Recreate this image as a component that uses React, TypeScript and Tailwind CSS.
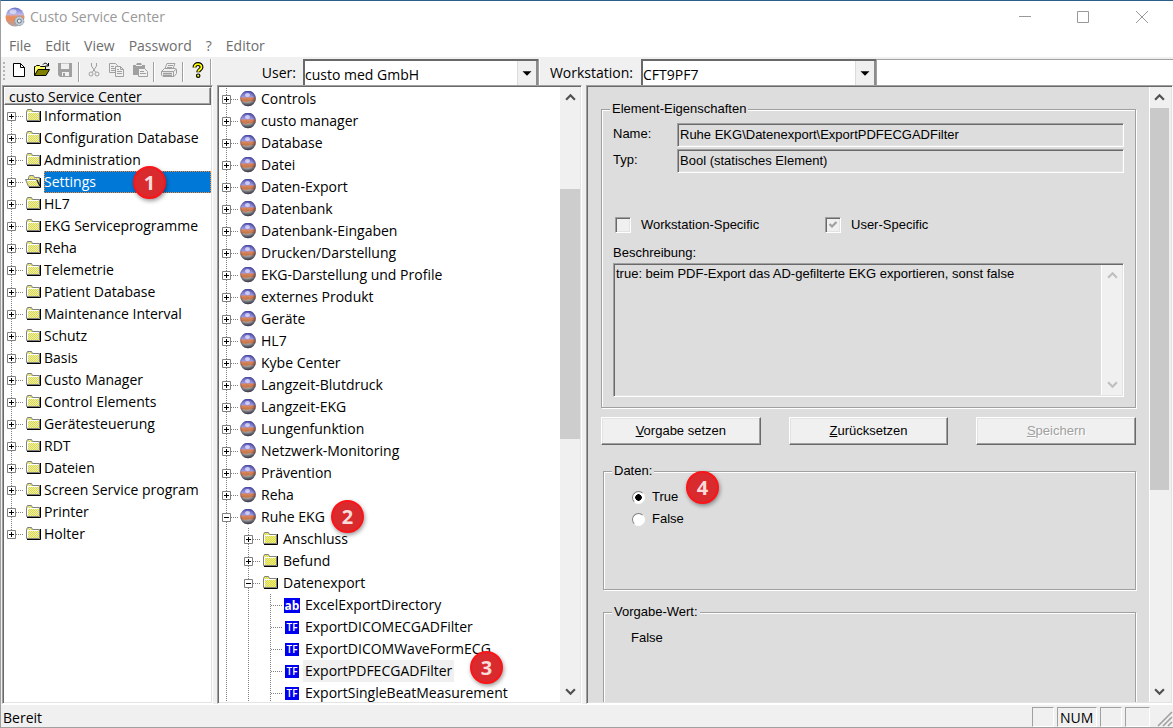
import { useState } from 'react';
import type { ReactNode } from 'react';
import clsx from 'clsx';

type IconName = 'folder' | 'open' | 'sphere' | 'yellow' | 'text' | 'bool';

type TreeItem = {
  label: string;
  icon: IconName;
  level?: number;
  state?: 'plus' | 'minus' | 'leaf';
  badge?: string;
};

const sunken =
  'border border-t-[#a0a0a0] border-l-[#a0a0a0] border-r-white border-b-white shadow-[inset_1px_1px_0_#696969,inset_-1px_-1px_0_#e3e3e3]';
const raised =
  'border border-t-white border-l-white border-r-[#696969] border-b-[#696969] bg-[#f0f0f0] shadow-[inset_-1px_-1px_0_#a0a0a0,inset_1px_1px_0_#e3e3e3]';

const menu = ['File', 'Edit', 'View', 'Password', '?', 'Editor'];

const sections = [
  'Information',
  'Configuration Database',
  'Administration',
  'Settings',
  'HL7',
  'EKG Serviceprogramme',
  'Reha',
  'Telemetrie',
  'Patient Database',
  'Maintenance Interval',
  'Schutz',
  'Basis',
  'Custo Manager',
  'Control Elements',
  'Gerätesteuerung',
  'RDT',
  'Dateien',
  'Screen Service program',
  'Printer',
  'Holter',
];

const groups = [
  'Controls',
  'custo manager',
  'Database',
  'Datei',
  'Daten-Export',
  'Datenbank',
  'Datenbank-Eingaben',
  'Drucken/Darstellung',
  'EKG-Darstellung und Profile',
  'externes Produkt',
  'Geräte',
  'HL7',
  'Kybe Center',
  'Langzeit-Blutdruck',
  'Langzeit-EKG',
  'Lungenfunktion',
  'Netzwerk-Monitoring',
  'Prävention',
  'Reha',
];

const settings: TreeItem[] = [
  ...groups.map((label): TreeItem => ({ label, icon: 'sphere' })),
  { label: 'Ruhe EKG', icon: 'sphere', state: 'minus', badge: '2' },
  { label: 'Anschluss', icon: 'yellow', level: 1 },
  { label: 'Befund', icon: 'yellow', level: 1 },
  { label: 'Datenexport', icon: 'yellow', level: 1, state: 'minus' },
  { label: 'ExcelExportDirectory', icon: 'text', level: 2, state: 'leaf' },
  { label: 'ExportDICOMECGADFilter', icon: 'bool', level: 2, state: 'leaf' },
  { label: 'ExportDICOMWaveFormECG', icon: 'bool', level: 2, state: 'leaf' },
  { label: 'ExportPDFECGADFilter', icon: 'bool', level: 2, state: 'leaf', badge: '3' },
  { label: 'ExportSingleBeatMeasurement', icon: 'bool', level: 2, state: 'leaf' },
];

export default function App() {
  const [section, setSection] = useState('Settings');
  const [setting, setSetting] = useState('ExportPDFECGADFilter');

  return (
    <div className="flex h-screen flex-col overflow-hidden border-t border-b border-l border-t-[#2a5f8c] border-b-[#a0a0a0] border-l-[#a0a0a0] bg-[#f0f0f0] font-['Open_Sans','Noto_Sans',sans-serif] text-sm text-black">
      <SharedDefs />
      <TitleBar />
      <nav className="flex h-[25px] shrink-0 items-center gap-[14px] bg-white pt-[2px] pl-2 text-[#6d6d6d]">
        {menu.map((item) => (
          <button className="leading-5" key={item} type="button">
            {item}
          </button>
        ))}
      </nav>
      <div className="flex h-7 shrink-0 border-t-2 border-t-[#f0f0f0] bg-white shadow-[inset_0_1px_0_#a0a0a0]">
        <Toolbar />
        <ComboBand label="User:" options={['custo med GmbH', 'Administrator']} />
        <ComboBand label="Workstation:" options={['CFT9PF7', 'Default']} narrow />
      </div>

      <main className="flex min-h-0 flex-1 gap-1 pl-px">
        <section className={clsx('flex w-[211px] shrink-0 flex-col overflow-hidden bg-white p-px', sunken)}>
          <h2 className="h-[18px] shrink-0 overflow-hidden border border-t-white border-l-white border-r-[#696969] border-b-[#696969] bg-[#f0f0f0] pl-1 leading-[18px] shadow-[inset_-1px_-1px_0_#a0a0a0]">
            custo Service Center
          </h2>
          <ul>
            {sections.map((label, index) => (
              <TreeRow
                first={index === 0}
                item={{
                  label,
                  icon: label === section ? 'open' : 'folder',
                  badge: label === 'Settings' ? '1' : undefined,
                }}
                key={label}
                last={index === sections.length - 1}
                onSelect={() => setSection(label)}
                selected={label === section}
                wide
              />
            ))}
          </ul>
        </section>

        <section className={clsx('flex w-[365px] shrink-0 overflow-hidden bg-white p-px', sunken)}>
          <ul className="min-w-0 flex-1 overflow-hidden pt-px">
            {settings.map((item) => (
              <TreeRow
                item={item}
                key={item.label}
                onSelect={() => setSetting(item.label)}
                selected={item.label === setting}
              />
            ))}
          </ul>
          <div className="flex w-5 flex-col bg-[#f0f0f0] text-[#505050]">
            <ScrollArrow up />
            <div className="flex-[81]" />
            <div className="flex-[251] bg-[#cdcdcd]" />
            <div className="flex-[242]" />
            <ScrollArrow />
          </div>
        </section>

        <section className={clsx('flex min-w-0 flex-1 overflow-hidden bg-[#dddddd] p-px', sunken)}>
          <Properties />
          <div className="flex w-[22px] shrink-0 flex-col border-r-2 border-l border-r-[#f0f0f0] border-l-white bg-[#f0f0f0] text-[#505050]">
            <ScrollArrow up />
            <div className="flex-[383] bg-[#c9c9c9]" />
            <div className="flex-[191]" />
            <ScrollArrow />
          </div>
        </section>
      </main>

      <footer className="flex h-[23px] shrink-0 items-stretch gap-[3px] border-t border-t-white pt-[2px] pl-[2px]">
        <span className="flex-1 leading-[22px]">Bereit</span>
        <StatusCell className="w-[22px]" />
        <StatusCell className="w-10">NUM</StatusCell>
        <StatusCell className="w-[22px]" />
        <StatusCell className="w-[25px]" />
        <svg aria-hidden="true" className="size-5" fill="none" viewBox="0 0 20 20">
          <path d="M5 19 19 5M10 19l9-9M15 19l4-4" stroke="#a0a0a0" strokeWidth="1.6" />
        </svg>
      </footer>
    </div>
  );
}

function TitleBar() {
  return (
    <header className="flex h-[31px] shrink-0 items-center bg-white pr-px pl-1 text-[#999]">
      <svg aria-hidden="true" className="size-5" viewBox="0 0 20 20">
        <circle cx="10" cy="10" fill="url(#sphere-light)" r="9.5" />
        <ellipse cx="8" cy="4.5" fill="#fff" opacity=".55" rx="3.5" ry="2.3" />
        <circle cx="14.3" cy="14" fill="#c3ccd4" r="4.6" stroke="#8a97a3" strokeDasharray="1.8 1" />
        <circle cx="14.3" cy="14" fill="#e8eef2" r="2" stroke="#667788" />
      </svg>
      <h1 className="ml-[5px] flex-1 leading-5">Custo Service Center</h1>
      <button aria-label="Minimize" className="grid h-full w-[58px] place-items-center" type="button">
        <svg className="size-3" fill="none" viewBox="0 0 12 12">
          <path d="M0 5.5h12" stroke="currentColor" />
        </svg>
      </button>
      <button aria-label="Maximize" className="grid h-full w-[58px] place-items-center" type="button">
        <svg className="size-3" fill="none" viewBox="0 0 12 12">
          <path d="M.5.5h11v11H.5z" stroke="currentColor" />
        </svg>
      </button>
      <button aria-label="Close" className="grid h-full w-[60px] place-items-center" type="button">
        <svg className="size-3" fill="none" viewBox="0 0 12 12">
          <path d="m0 0 12 12M12 0 0 12" stroke="currentColor" />
        </svg>
      </button>
    </header>
  );
}

function Toolbar() {
  return (
    <div className="flex w-[210px] shrink-0 items-center border-r border-r-[#a0a0a0] bg-[#f0f0f0] pl-[2px]">
      <div className="mr-[2px] h-5 w-[2px] bg-[repeating-linear-gradient(#b4b4b4_0_2px,transparent_2px_4px)]" />
      <ToolButton label="New">
        <path d="M2.5 1.5h7l4 4v9h-11z" fill="#fff" stroke="#000" />
        <path d="M9.5 1.5v4h4" stroke="#000" />
      </ToolButton>
      <ToolButton label="Open">
        <path d="M.5 13.5v-9h1l1-1h3l1 1h5v3" fill="#ffff66" stroke="#000" />
        <path d="M.5 13.5 4 7.500h11.500L12 13.500z" fill="#808000" stroke="#000" />
        <path d="M9 2.500c1.500-2 4-1.500 5 1M14.500 1v3h-3" stroke="#000" />
      </ToolButton>
      <ToolButton label="Save">
        <path d="M1 1h14v14H3l-2-2z" fill="#a0a0a0" />
        <path d="M4 1.500h8V7H4zM5 10h7v4H5z" fill="#f0f0f0" />
        <path d="M6 11h2v3H6z" fill="#a0a0a0" />
      </ToolButton>
      <Separator />
      <ToolButton label="Cut">
        <path d="M5.500 1v3l4 6M10.500 1v3l-4 6" stroke="#a0a0a0" />
        <circle cx="5" cy="12" r="2" stroke="#a0a0a0" />
        <circle cx="11" cy="12" r="2" stroke="#a0a0a0" />
      </ToolButton>
      <ToolButton label="Copy">
        <path d="M.5 1.500h6l2 2v7h-8zM2 4.500h3M2 6.500h5M2 8.500h4" stroke="#a0a0a0" />
        <path d="M6.500 4.500h5l3 3v7h-8z" fill="#f0f0f0" stroke="#a0a0a0" />
        <path d="M11.500 4.500v3h3M8 7.500h2M8 9.500h5M8 11.500h5" stroke="#a0a0a0" />
      </ToolButton>
      <ToolButton label="Paste">
        <path d="M1 3h3l1-2h4l1 2h3v10H1z" fill="#a0a0a0" />
        <path d="M4 3.500h6" stroke="#f0f0f0" />
        <path d="M6.500 6.500h6l3 3v5h-9z" fill="#f0f0f0" stroke="#a0a0a0" />
        <path d="M8 9.500h4M8 11.500h6" stroke="#a0a0a0" />
      </ToolButton>
      <Separator />
      <ToolButton label="Print">
        <path d="M4 6.500 6 1.500h8l-2 5M7 3.500h5M6 5.500h5" stroke="#a0a0a0" />
        <path d="m.5 9.500 3-3h11l1 1v4l-2.500 3H2l-1.500-1.500zM.5 9.500h12l3-2.500M12.500 9.500v5" stroke="#a0a0a0" />
        <path d="M2 11.500h9M2 13.500h9" stroke="#a0a0a0" strokeWidth="1.400" />
      </ToolButton>
      <Separator />
      <ToolButton label="Help">
        <path d="M4.500 5.500C4.500 1 11.500 1 11.500 5.200c0 2.300-3.300 2.800-3.300 5" stroke="#000" strokeWidth="4" />
        <path d="M4.500 5.500C4.500 1 11.500 1 11.500 5.200c0 2.300-3.300 2.800-3.300 4.500" stroke="#ff0" strokeWidth="1.800" />
        <circle cx="8.200" cy="13.700" fill="#ff0" r="1.700" stroke="#000" strokeWidth="1.200" />
      </ToolButton>
    </div>
  );
}

function ToolButton({ label, children }: { label: string; children: ReactNode }) {
  return (
    <button aria-label={label} className="grid h-6 w-[23px] shrink-0 place-items-center pb-1" type="button">
      <svg className="size-4" fill="none" viewBox="0 0 16 16">
        {children}
      </svg>
    </button>
  );
}

function Separator() {
  return <div className="mx-[2px] h-5 w-[2px] shrink-0 border-r border-l border-r-white border-l-[#a0a0a0]" />;
}

function ComboBand({ label, options, narrow }: { label: string; options: string[]; narrow?: boolean }) {
  return (
    <label className="flex shrink-0 border-r border-l border-r-[#a0a0a0] border-l-white bg-[#f0f0f0]">
      <span
        className={clsx('text-right leading-[27px]', narrow ? 'w-[101px] pr-2' : 'w-[91px] pr-[7px]')}
      >
        {label}
      </span>
      <span className="relative flex w-[235px] border-t-2 border-l-2 border-t-[#696969] border-l-[#696969] bg-white">
        <select className="w-full appearance-none bg-transparent pt-[3px] outline-none">
          {options.map((option) => (
            <option key={option}>{option}</option>
          ))}
        </select>
        <svg
          aria-hidden="true"
          className="pointer-events-none absolute top-0 right-0 h-full w-[21px] border-r-2 border-l border-r-[#8c8c8c] border-l-[#dcdcdc] bg-[#f0f0f0]"
          viewBox="0 0 20 24"
        >
          <path d="M5 10h10l-5 5z" fill="#000" />
        </svg>
      </span>
    </label>
  );
}

type TreeRowProps = {
  item: TreeItem;
  selected: boolean;
  onSelect: () => void;
  first?: boolean;
  last?: boolean;
  wide?: boolean;
};

function TreeRow({ item, selected, onSelect, first, last, wide }: TreeRowProps) {
  const { level = 0, state = 'plus' } = item;

  return (
    <li className="flex h-[22px] items-center whitespace-nowrap">
      {Array.from({ length: level }, (_, index) => (
        <svg aria-hidden="true" className="h-[22px] w-[22px] shrink-0" key={index} viewBox="0 0 22 22">
          <path d="M7.500 0v22" stroke="#808080" strokeDasharray="1 1" />
        </svg>
      ))}
      <svg aria-hidden="true" className="h-[22px] w-[21px] shrink-0" fill="none" viewBox="0 0 21 22">
        {first ? null : <path d="M7.500 0v11" stroke="#808080" strokeDasharray="1 1" />}
        {last ? null : <path d="M7.500 12v10" stroke="#808080" strokeDasharray="1 1" />}
        <path d="M8 11.500h11" stroke="#808080" strokeDasharray="1 1" />
        {state === 'leaf' ? null : (
          <>
            <path d="M3.500 7.500h8v8h-8z" fill="#fff" stroke="#808080" />
            <path d={state === 'plus' ? 'M5 11.500h5M7.500 9v5' : 'M5 11.500h5'} stroke="#000" />
          </>
        )}
      </svg>
      <NodeIcon name={item.icon} />
      <span className={clsx('relative ml-[3px] flex', wide && 'min-w-0 flex-1')}>
        <button
          className={clsx(
            'h-[22px] text-left leading-[22px]',
            wide ? 'w-full' : 'px-[2px]',
            selected && wide && 'bg-[#0078d7] text-white outline outline-dotted -outline-offset-1 outline-[#ff8728]',
            selected && !wide && 'bg-[#f0f0f0]',
          )}
          onClick={onSelect}
          type="button"
        >
          {item.label}
        </button>
        {item.badge === '1' ? <Badge className="top-[-5px] left-[89px]">1</Badge> : null}
        {item.badge === '2' ? <Badge className="top-[-6px] left-[72px]">2</Badge> : null}
        {item.badge === '3' ? <Badge className="top-[-9px] left-[167px]">3</Badge> : null}
      </span>
    </li>
  );
}

function Badge({ className, children }: { className: string; children: ReactNode }) {
  return (
    <span
      className={clsx(
        'pointer-events-none absolute z-10 grid size-[33px] place-items-center rounded-full border-2 border-[#fb1418] bg-[#d92a2e] text-xl leading-none font-bold text-[#fbdcdc] shadow-[1px_2px_4px_rgba(0,0,0,0.4)]',
        className,
      )}
    >
      {children}
    </span>
  );
}

function NodeIcon({ name }: { name: IconName }) {
  if (name === 'text' || name === 'bool') {
    return (
      <span
        className={clsx(
          'grid w-4 shrink-0 place-items-center bg-[#0000f0] bg-clip-content text-white',
          name === 'text' ? 'text-[12px] leading-[15px] font-bold' : 'px-px text-[10px] leading-[13px] font-semibold',
        )}
      >
        {name === 'text' ? 'ab' : 'TF'}
      </span>
    );
  }

  return (
    <svg aria-hidden="true" className="size-4 shrink-0" fill="none" viewBox="0 0 16 16">
      {name === 'sphere' ? (
        <>
          <circle cx="8" cy="7.500" fill="url(#sphere)" r="7.800" />
          <circle cx="8" cy="7.500" fill="url(#sphere-shade)" r="7.800" />
          <ellipse cx="7.500" cy="4" fill="#ececff" opacity=".7" rx="2.500" ry="2" />
          <path d="M3 8.500h1M6 7.500h1M9 9.500h1M11 7.500h2M5 10.500h2" stroke="#f07030" />
        </>
      ) : null}
      {name === 'folder' || name === 'yellow' ? (
        <>
          <path d="M2 13.500h13.500V3" stroke="#000" />
          <path
            d="M1.500 12.500v-9l1-2h4l1 2h7v9z"
            fill={name === 'yellow' ? 'url(#hatch-yellow)' : 'url(#hatch)'}
            stroke="#808080"
          />
          <path d="M2.500 11.500v-7h11" stroke="#fff" />
        </>
      ) : null}
      {name === 'open' ? (
        <>
          <path d="M3.500 6V3.500l1-2h4l1 2h5v9" fill="url(#hatch)" stroke="#808080" />
          <path d="M15.500 4v9.500H4" stroke="#000" />
          <path d="M.5 5.500h11l3 7h-11z" fill="url(#hatch)" stroke="#808080" />
          <path d="M2 6.500h9" stroke="#fff" />
          <path d="m12 6 3 6" stroke="#000" />
        </>
      ) : null}
    </svg>
  );
}

function ScrollArrow({ up }: { up?: boolean }) {
  return (
    <div className="grid h-[21px] shrink-0 place-items-center">
      <svg aria-hidden="true" className="size-[11px]" fill="none" viewBox="0 0 10 10">
        <path d={up ? 'm1 7 4-4 4 4' : 'm1 3 4 4 4-4'} stroke="currentColor" strokeWidth="2" />
      </svg>
    </div>
  );
}

function StatusCell({ className, children }: { className: string; children?: ReactNode }) {
  return (
    <span
      className={clsx(
        'border border-t-[#a0a0a0] border-l-[#a0a0a0] border-r-white border-b-white pl-[2px] leading-5',
        className,
      )}
    >
      {children}
    </span>
  );
}

function Group({ title, className, children }: { title: string; className?: string; children: ReactNode }) {
  return (
    <fieldset
      className={clsx(
        'relative min-w-0 border border-[#a0a0a0] px-2 shadow-[1px_1px_0_#fff,inset_1px_1px_0_#fff]',
        className,
      )}
    >
      <legend className="bg-[#dddddd] px-[2px] leading-4">{title}</legend>
      {children}
    </fieldset>
  );
}

function Properties() {
  const [value, setValue] = useState('True');

  return (
    <form className="min-w-0 flex-1 overflow-hidden px-[13px] pt-[14px] font-['Liberation_Sans',Arial,sans-serif] text-[13px]">
      <Group className="h-[307px]" title="Element-Eigenschaften">
        <div className="flex flex-col px-[3px] pt-[6px]">
          <Field label="Name:" value="Ruhe EKG\Datenexport\ExportPDFECGADFilter" />
          <Field label="Typ:" value="Bool (statisches Element)" />
          <div className="mt-[38px] flex h-6 items-center">
            <Check label="Workstation-Specific" />
            <Check checked label="User-Specific" />
          </div>
          <label className="mt-2 leading-4" htmlFor="description">
            Beschreibung:
          </label>
          <div className={clsx('mt-[2px] flex h-[134px] p-px', sunken)}>
            <textarea
              className="min-w-0 flex-1 resize-none bg-transparent p-px leading-4 outline-none"
              defaultValue="true: beim PDF-Export das AD-gefilterte EKG exportieren, sonst false"
              id="description"
              readOnly
            />
            <div className="flex w-[21px] flex-col justify-between border-l border-l-white bg-[#f0f0f0] text-[#bfbfbf]">
              <ScrollArrow up />
              <ScrollArrow />
            </div>
          </div>
        </div>
      </Group>

      <div className="mt-[9px] flex gap-7">
        <button className={clsx('h-7 flex-1', raised)} type="button">
          <u>V</u>orgabe setzen
        </button>
        <button className={clsx('h-7 flex-1', raised)} type="button">
          <u>Z</u>urücksetzen
        </button>
        <button className={clsx('h-7 flex-1 text-[#a0a0a0] text-shadow-[1px_1px_0_#fff]', raised)} disabled type="button">
          <u>S</u>peichern
        </button>
      </div>

      <Group className="mt-[18px] ml-[2px] h-[127px]" title="Daten:">
        <div className="flex flex-col items-start pt-[7px] pl-5">
          {['True', 'False'].map((option) => (
            <label className="flex h-[22px] items-center gap-[7px]" key={option}>
              <input
                checked={value === option}
                className="size-[13px] appearance-none rounded-full border border-t-[#808080] border-l-[#808080] border-r-white border-b-white bg-white checked:bg-[radial-gradient(circle,#000_0_3px,transparent_3.5px)]"
                name="data"
                onChange={() => setValue(option)}
                type="radio"
              />
              {option}
            </label>
          ))}
        </div>
        <Badge className="top-[-8px] left-[82px] font-['Open_Sans',sans-serif]">4</Badge>
      </Group>

      <Group className="mt-[14px] ml-[2px] h-[127px]" title="Vorgabe-Wert:">
        <p className="pt-[10px] pl-[19px] leading-4">False</p>
      </Group>
    </form>
  );
}

function Field({ label, value }: { label: string; value: string }) {
  return (
    <label className="mb-[2px] flex">
      <span className="w-16 shrink-0 pt-[3px] leading-4">{label}</span>
      <input className={clsx('h-6 min-w-0 flex-1 px-[2px] pb-[2px] outline-none', sunken)} defaultValue={value} readOnly />
    </label>
  );
}

function Check({ label, checked }: { label: string; checked?: boolean }) {
  return (
    <label className="relative flex w-[210px] items-center gap-[10px] pl-[2px]">
      <input
        className={clsx('size-4 appearance-none bg-[#f0f0f0]', sunken)}
        defaultChecked={checked}
        disabled
        type="checkbox"
      />
      {checked ? (
        <svg aria-hidden="true" className="pointer-events-none absolute left-[2px] size-4" fill="none" viewBox="0 0 16 16">
          <path d="m4.500 7 2.500 2.500L11.500 5" stroke="#a0a0a0" strokeWidth="2.200" />
        </svg>
      ) : null}
      {label}
    </label>
  );
}

// Paint servers used by the tree and title icons
function SharedDefs() {
  return (
    <svg aria-hidden="true" className="absolute size-0">
      <defs>
        <linearGradient id="sphere" x1="0" x2="0" y1="0" y2="1">
          <stop offset="0" stopColor="#5050b8" />
          <stop offset=".38" stopColor="#9a96e0" />
          <stop offset=".48" stopColor="#d88860" />
          <stop offset=".64" stopColor="#c07850" />
          <stop offset=".72" stopColor="#a0a0a0" />
          <stop offset="1" stopColor="#585858" />
        </linearGradient>
        <radialGradient cx=".45" cy=".45" id="sphere-shade" r=".55">
          <stop offset=".6" stopColor="#202040" stopOpacity="0" />
          <stop offset="1" stopColor="#202040" stopOpacity=".6" />
        </radialGradient>
        <linearGradient id="sphere-light" x1="0" x2="0" y1="0" y2="1">
          <stop offset="0" stopColor="#6a70c8" />
          <stop offset=".35" stopColor="#b8b8ec" />
          <stop offset=".5" stopColor="#f08a50" />
          <stop offset=".68" stopColor="#e0906c" />
          <stop offset="1" stopColor="#a8a8b0" />
        </linearGradient>
        <pattern height="2" id="hatch" patternUnits="userSpaceOnUse" width="2">
          <path d="M0 0h2v2H0z" fill="#c8c8c8" />
          <path d="M0 0h1v1H0zM1 1h1v1H1z" fill="#ffff30" />
        </pattern>
        <pattern height="2" id="hatch-yellow" patternUnits="userSpaceOnUse" width="2">
          <path d="M0 0h2v2H0z" fill="#ffff00" />
          <path d="M0 0h1v1H0zM1 1h1v1H1z" fill="#c8c8c8" />
        </pattern>
      </defs>
    </svg>
  );
}
